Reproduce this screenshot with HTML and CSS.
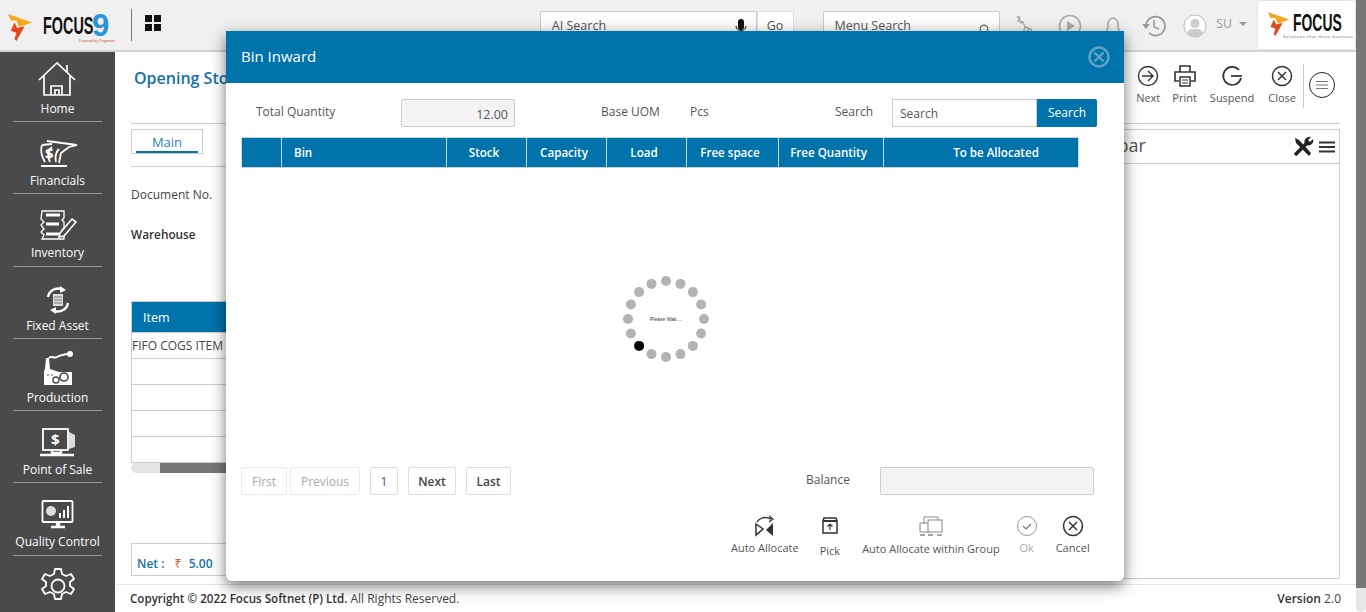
FILE: index.html
```html
<!DOCTYPE html>
<html>
<head>
  <meta charset="utf-8">
  <title>Opening Stock</title>
  <link rel="stylesheet" href="styles.css">
</head>
<body>
<div class="app">
  <div class="page">
    <header class="topbar">
      <div class="brand">
        <svg class="flame" width="26" height="28" viewBox="0 0 28 30"><polygon points="0,0 26,9 12,14 9,7 3,7" fill="#f5a623"/><polygon points="7,9 10,15 18,13 9,29 7,27 9,20 3,18" fill="#e2491f"/></svg>
        <div class="brand-mark">
          <div class="brand-line"><span class="brand-name">FOCUS</span><span class="brand-nine">9</span></div>
          <span class="brand-tag">Powered by Pragmatic</span>
        </div>
      </div>
      <div class="top-divider"></div>
      <svg class="apps" width="16" height="16" viewBox="0 0 16 16"><path d="M0 0h7v7H0zM9 0h7v7H9zM0 9h7v7H0zM9 9h7v7H9z" fill="#111"/></svg>
      <div class="top-search ai-search"><span>AI Search</span>
        <svg width="12" height="18" viewBox="0 0 12 18"><rect x="3" y="1" width="6" height="11" rx="3" fill="#111"/><path d="M1 8c0 6 10 6 10 0M6 13v3M3 16h6" stroke="#111" fill="none"/></svg>
      </div>
      <div class="go-btn">Go</div>
      <div class="top-search menu-search"><span>Menu Search</span>
        <svg width="12" height="12" viewBox="0 0 12 12"><circle cx="5" cy="5" r="3.800" stroke="#777" stroke-width="1.400" fill="none"/><path d="M8 8l3.500 3.500" stroke="#777" stroke-width="1.600"/></svg>
      </div>
      <svg class="top-icon deer" width="22" height="24" viewBox="0 0 22 24"><path d="M3 2l3 5 3 1 2 5 6 2 2 6M5 2l1 3M9 8l-3 1M11 13l-2 6M15 15l-4 5M3 7l3 0" stroke="#aaa" stroke-width="1.400" fill="none"/></svg>
      <svg class="top-icon play" width="24" height="24" viewBox="0 0 24 24"><circle cx="12" cy="12" r="10.500" stroke="#aaa" stroke-width="1.600" fill="none"/><path d="M9 7l8 5-8 5z" fill="#aaa"/></svg>
      <svg class="top-icon bell" width="22" height="24" viewBox="0 0 22 24"><path d="M4 18c2-2 2-5 2-8 0-3 2-6 5-6s5 3 5 6c0 3 0 6 2 8z M9 21h4" stroke="#aaa" stroke-width="1.600" fill="none"/></svg>
      <svg class="top-icon history" width="24" height="24" viewBox="0 0 24 24"><path d="M4 12a9.500 9.500 0 1 1 3 7" stroke="#999" stroke-width="1.700" fill="none"/><path d="M0 10h8l-4 5z" fill="#999"/><path d="M12 6v7l5 2" stroke="#999" stroke-width="1.600" fill="none"/></svg>
      <svg class="top-icon user" width="24" height="24" viewBox="0 0 24 24"><circle cx="12" cy="12" r="11" fill="#fff" stroke="#bbb"/><circle cx="12" cy="9.500" r="4.500" fill="#ccc"/><path d="M4 20c1-5 5-5 8-5s7 0 8 5c-4 4-12 4-16 0z" fill="#ccc"/></svg>
      <span class="user-name">SU</span>
      <span class="caret"></span>
      <div class="company-logo">
        <svg width="23" height="25" viewBox="0 0 28 30"><polygon points="0,0 26,9 12,14 9,7 3,7" fill="#f5a623"/><polygon points="7,9 10,15 18,13 9,29 7,27 9,20 3,18" fill="#e2491f"/></svg>
        <div class="company-text"><span class="company-name">FOCUS</span><span class="company-tag">Solutions that move business</span></div>
      </div>
    </header>

    <div class="workspace">
      <nav class="sidebar">
        <a class="nav-item">
          <svg width="40" height="36" viewBox="0 0 40 36"><path d="M1 19L19 2l18 17M29 4v7M6 15v19h26V15M13 34v-9h11v9M17 34v-5h4v5" stroke="#fff" stroke-width="1.700" fill="none"/></svg>
          <span>Home</span></a>
        <a class="nav-item">
          <svg width="38" height="30" viewBox="0 0 38 30"><path d="M8 2l30 4-8 2-8 6-2 10M3 6l10-1M3 6c-2 6 0 12 3 17M13 8c-4 3-5 9-2 15M20 10c-3 3-4 8-3 13M2 27h26" stroke="#fff" stroke-width="1.800" fill="none"/><text x="6" y="20" class="nav-glyph">$</text></svg>
          <span>Financials</span></a>
        <a class="nav-item">
          <svg width="38" height="32" viewBox="0 0 38 32"><path d="M3 2h22v7l-2 2 2 2v6l-2 2 2 1v8H3l2-4-3-3 3-3-3-4 3-3-3-3z" stroke="#fff" stroke-width="1.300" fill="none"/><path d="M7 6h14M7 15h13M7 25h13" stroke="#fff" stroke-width="3"/><path d="M21 24l12-14 4 3-12 14-5 1z" stroke="#fff" stroke-width="1.600" fill="#4a4a4a"/></svg>
          <span>Inventory</span></a>
        <a class="nav-item">
          <svg width="24" height="28" viewBox="0 0 24 28"><path d="M2 11C3 5 9 1 16 3M22 17c-1 6-7 10-14 8" stroke="#fff" stroke-width="2.400" fill="none"/><path d="M14 0l6 4-6 3zM10 21l-6 3 6 4z" fill="#fff"/><rect x="7" y="8" width="10" height="12" fill="#ddd"/><path d="M8 11h8M8 14h8M8 17h8" stroke="#777"/></svg>
          <span>Fixed Asset</span></a>
        <a class="nav-item">
          <svg width="32" height="36" viewBox="0 0 32 36"><path d="M3 19l1-11h3l1 11 9 3 1 0h12v13H2V21z" fill="#fff"/><circle cx="28" cy="4" r="3" fill="#fff"/><path d="M7 8c3-3 5 1 8-1s5-2 10-3" stroke="#fff" stroke-width="2" fill="none"/><circle cx="22" cy="27" r="4" stroke="#4a4a4a" stroke-width="1.600" fill="none"/><circle cx="14" cy="30" r="3" stroke="#4a4a4a" stroke-width="1.400" fill="none"/><path d="M5 25h2M9 25h2" stroke="#4a4a4a"/></svg>
          <span>Production</span></a>
        <a class="nav-item">
          <svg width="38" height="30" viewBox="0 0 38 30"><rect x="4" y="1" width="25" height="21" stroke="#fff" stroke-width="1.800" fill="none"/><path d="M30 4l6 3v12l-6 2z" fill="#ddd"/><path d="M13 22v3h9v-3M1 27h34" stroke="#fff" stroke-width="2.400" fill="none"/><text x="12" y="17" class="nav-glyph">$</text></svg>
          <span>Point of Sale</span></a>
        <a class="nav-item">
          <svg width="34" height="30" viewBox="0 0 34 30"><rect x="1.500" y="1" width="30" height="21" rx="1" stroke="#fff" stroke-width="1.800" fill="none"/><circle cx="10" cy="11" r="5" fill="#ddd"/><path d="M18 18v-5h2v5zM22 18v-8h2v8zM26 18V6h2v12z" fill="#fff"/><path d="M16 22v3h2v-3M10 27h14" stroke="#fff" stroke-width="2.400"/></svg>
          <span>Quality Control</span></a>
        <a class="nav-item">
          <svg width="38" height="38" viewBox="0 0 38 38"><path d="M16 2h6l1 5 4 2 5-2 3 5-4 3v4l4 3-3 5-5-2-4 2-1 5h-6l-1-5-4-2-5 2-3-5 4-3v-4L3 12l3-5 5 2 4-2z" stroke="#fff" stroke-width="1.800" fill="none" stroke-linejoin="round"/><circle cx="19" cy="19" r="6.500" stroke="#fff" stroke-width="1.800" fill="none"/></svg>
          <span>Settings</span></a>
      </nav>

      <div class="content">
        <main class="main-area">
          <div class="doc-head">
            <h1 class="doc-title">Opening Stocks New</h1>
            <div class="doc-tools">
              <div class="tool">
                <svg width="22" height="22" viewBox="0 0 22 22"><circle cx="11" cy="11" r="9.500" stroke="#333" stroke-width="1.400" fill="none"/><path d="M5 11h11M11 6l5 5-5 5" stroke="#333" stroke-width="1.400" fill="none"/></svg>
                <span>Next</span></div>
              <div class="tool tool-print">
                <svg width="22" height="22" viewBox="0 0 22 22"><path d="M6 7V1h10v6M5 16H1V7h20v9h-4" stroke="#333" stroke-width="1.600" fill="none"/><path d="M6 12h10v9H6z" stroke="#333" stroke-width="1.500" fill="none"/><path d="M8 15h6M8 18h6" stroke="#333"/></svg>
                <span>Print</span></div>
              <div class="tool">
                <svg width="22" height="22" viewBox="0 0 22 22"><path d="M18 5a9 9 0 1 0 2 8" stroke="#333" stroke-width="1.700" fill="none"/><path d="M10 11h11" stroke="#333" stroke-width="1.700"/></svg>
                <span>Suspend</span></div>
              <div class="tool tool-close">
                <svg width="22" height="22" viewBox="0 0 22 22"><circle cx="11" cy="11" r="9.500" stroke="#333" stroke-width="1.500" fill="none"/><path d="M7 7l8 8M15 7l-8 8" stroke="#333" stroke-width="1.500"/></svg>
                <span>Close</span></div>
              <div class="tool-divider"></div>
              <svg class="doc-menu" width="28" height="28" viewBox="0 0 28 28"><circle cx="14" cy="14" r="12.500" stroke="#222" fill="#fff"/><path d="M8 10.500h12M8 14h12M8 17.500h12" stroke="#777"/></svg>
            </div>
          </div>
          <div class="doc-body">
            <section class="doc-form">
              <div class="tabs"><div class="tab">Main</div></div>
              <div class="field-row doc-no">Document No.</div>
              <div class="field-row warehouse">Warehouse</div>
              <table class="item-table">
                <tr><th>Item</th></tr>
                <tr><td>FIFO COGS ITEM</td></tr>
                <tr><td></td></tr>
                <tr><td></td></tr>
                <tr><td></td></tr>
                <tr><td></td></tr>
              </table>
              <div class="h-scroll"><div class="h-thumb"></div></div>
              <div class="net-box">
                <span class="net-label">Net :</span><span class="rupee">₹</span><span class="net-value">5.00</span>
              </div>
            </section>
            <aside class="side-panel">
              <div class="side-head">
                <span class="side-title">Sidebar</span>
                <svg width="22" height="22" viewBox="0 0 22 22"><path d="M3 19L15 7" stroke="#222" stroke-width="3.500"/><path d="M13 8a5 5 0 0 1 6-7l-3 3 2 2 3-3a5 5 0 0 1-7 6z" fill="#222"/><path d="M3 2l4 2 12 13-2 3L4 7z" fill="#222"/></svg>
                <svg width="16" height="12" viewBox="0 0 16 12"><path d="M0 1.500h16M0 6h16M0 10.500h16" stroke="#333" stroke-width="1.800"/></svg>
              </div>
            </aside>
          </div>
        </main>
        <footer class="footer">
          <span class="copyright"><b>Copyright © 2022 Focus Softnet (P) Ltd.</b> All Rights Reserved.</span>
          <span class="version"><b>Version</b> 2.0</span>
        </footer>
      </div>
    </div>
  </div>
  <div class="v-scroll"><div class="v-thumb"></div></div>

  <div class="modal">
    <div class="modal-head">
      <span class="modal-title">Bin Inward</span>
      <svg width="24" height="24" viewBox="0 0 24 24"><circle cx="12" cy="12" r="9.500" stroke="#5fa3c9" stroke-width="2.400" fill="none"/><path d="M7.500 7.500l9 9M16.500 7.500l-9 9" stroke="#5fa3c9" stroke-width="2.400"/></svg>
    </div>
    <div class="modal-body">
      <div class="filter-row">
        <label class="lbl-qty">Total Quantity</label>
        <div class="ro-box qty-box">12.00</div>
        <label class="lbl-uom">Base UOM</label>
        <label class="lbl-pcs">Pcs</label>
        <label class="lbl-search">Search</label>
        <div class="search-box">Search</div>
        <div class="search-btn">Search</div>
      </div>
      <table class="bin-table">
        <colgroup><col class="c-sel"><col class="c-bin"><col class="c-num"><col class="c-num"><col class="c-num"><col class="c-free"><col class="c-qty"><col class="c-alloc"></colgroup>
        <tr>
          <th></th><th class="left">Bin</th><th>Stock</th><th>Capacity</th><th>Load</th><th>Free space</th><th>Free Quantity</th><th class="alloc">To be Allocated</th>
        </tr>
      </table>
      <div class="loader-area">
        <svg class="loader" width="92" height="92" viewBox="-46 -46 92 92">
          <g fill="#b3b3b3">
            <circle cx="0" cy="-38" r="5"/><circle cx="14.500" cy="-35.100" r="5"/><circle cx="26.900" cy="-26.900" r="5"/><circle cx="35.100" cy="-14.500" r="5"/>
            <circle cx="38" cy="0" r="5"/><circle cx="35.100" cy="14.500" r="5"/><circle cx="26.900" cy="26.900" r="5"/><circle cx="14.500" cy="35.100" r="5"/>
            <circle cx="0" cy="38" r="5"/><circle cx="-14.500" cy="35.100" r="5"/><circle cx="-35.100" cy="14.500" r="5"/><circle cx="-38" cy="0" r="5"/>
            <circle cx="-35.100" cy="-14.500" r="5"/><circle cx="-26.900" cy="-26.900" r="5"/><circle cx="-14.500" cy="-35.100" r="5"/>
          </g>
          <circle cx="-26.900" cy="26.900" r="5" fill="#000"/>
          <text x="0" y="1.500" text-anchor="middle" class="loader-text">Please Wait ...</text>
        </svg>
      </div>
      <div class="pager-row">
        <div class="pg pg-first off">First</div>
        <div class="pg pg-prev off">Previous</div>
        <div class="pg pg-one">1</div>
        <div class="pg pg-next strong">Next</div>
        <div class="pg pg-last strong">Last</div>
        <label class="lbl-balance">Balance</label>
        <div class="ro-box balance-box"></div>
      </div>
      <div class="action-row">
        <div class="action act-auto">
          <svg width="22" height="22" viewBox="0 0 22 22"><path d="M3 7C5 3 11 1 17 4" stroke="#333" stroke-width="1.500" fill="none"/><path d="M15 1l4 3-4 3" stroke="#333" stroke-width="1.300" fill="none"/><path d="M2 9l7 5-7 6z" stroke="#333" stroke-width="1.500" fill="none"/><path d="M19 8v13l-7-6z" fill="#333"/></svg>
          <span>Auto Allocate</span></div>
        <div class="action act-pick">
          <svg width="18" height="22" viewBox="0 0 18 22"><path d="M2 6l1-3h12l1 3v12H2z" stroke="#333" stroke-width="1.500" fill="none"/><path d="M2 6h14" stroke="#333" stroke-width="2"/><path d="M9 15v-6M6.500 11.500L9 9l2.500 2.500" stroke="#333" stroke-width="1.200" fill="none"/></svg>
          <span>Pick</span></div>
        <div class="action act-group">
          <svg width="24" height="22" viewBox="0 0 24 22"><path d="M5 9V2h14v5" stroke="#888" fill="none"/><rect x="1" y="8" width="10" height="9" stroke="#888" fill="none"/><rect x="9" y="5" width="14" height="12" stroke="#888" fill="#fff"/><path d="M1 20h5M9 20h5M18 20h5" stroke="#888" stroke-width="1.600"/></svg>
          <span>Auto Allocate within Group</span></div>
        <div class="action act-ok">
          <svg width="22" height="22" viewBox="0 0 22 22"><circle cx="11" cy="11" r="9.500" stroke="#8b9aa5" fill="none"/><path d="M7 11l3 3 5-5" stroke="#777" stroke-width="1.200" fill="none"/></svg>
          <span>Ok</span></div>
        <div class="action act-cancel">
          <svg width="22" height="22" viewBox="0 0 22 22"><circle cx="11" cy="11" r="9.500" stroke="#333" stroke-width="1.500" fill="none"/><path d="M7 7l8 8M15 7l-8 8" stroke="#333" stroke-width="1.500"/></svg>
          <span>Cancel</span></div>
      </div>
    </div>
  </div>
</div>
</body>
</html>
```

FILE: styles.css
```css
* {
  box-sizing: border-box;
}
html, body {
  margin: 0;
  height: 612px;
  overflow: hidden;
}
body {
  font-family: "Open Sans", sans-serif;
  font-size: 12px;
  color: #444;
  background: #fff;
}
.app {
  position: relative;
  display: flex;
  width: 1366px;
  height: 612px;
  overflow: hidden;
}
.page {
  width: 1356px;
  height: 612px;
  display: flex;
  flex-direction: column;
}

/* scrollbar */
.v-scroll {
  width: 10px;
  height: 612px;
  background: #e6e6e6;
  border-radius: 0 0 5px 5px;
}
.v-thumb {
  height: 588px;
  background: #777;
}

/* top bar */
.topbar {
  height: 52px;
  flex: none;
  display: flex;
  align-items: flex-start;
  background: #f0f0f0;
  border-bottom: 2px solid #d2d2d2;
}
.brand {
  width: 123px;
  height: 50px;
  display: flex;
  padding: 14px 0 0 8px;
}
.brand-mark {
  display: flex;
  flex-direction: column;
  margin-left: 9px;
}
.brand-line {
  height: 23px;
  display: flex;
  align-items: center;
}
.brand-name {
  width: 49px;
  font-family: "Liberation Sans", sans-serif;
  font-weight: 700;
  font-size: 24px;
  color: #111;
  transform: scaleX(.6);
  transform-origin: left center;
  white-space: nowrap;
}
.brand-nine {
  font-family: "Liberation Sans", sans-serif;
  font-weight: 700;
  font-size: 31px;
  line-height: 23px;
  color: #2a93d5;
}
.brand-tag {
  margin: 2px 0 0 36px;
  font-size: 3.500px;
  line-height: 4px;
  color: #c83a3a;
  white-space: nowrap;
}
.top-divider {
  width: 1px;
  height: 32px;
  margin: 9px 0 0 8px;
  background: #777;
}
.apps {
  margin: 15px 0 0 13px;
}
.top-search {
  height: 40px;
  margin-top: 11px;
  padding: 5px 11px 0;
  display: flex;
  justify-content: space-between;
  background: linear-gradient(#fff, #f4f4f4);
  border: 1px solid #ccc;
  border-radius: 2px;
  font-size: 12.500px;
  color: #555;
}
.ai-search {
  width: 217px;
  margin-left: 379px;
}
.ai-search svg {
  margin: 1px -2px 0 0;
}
.menu-search {
  width: 178px;
  margin-left: 29px;
}
.menu-search svg {
  margin-top: 7px;
  margin-right: -3px;
}
.go-btn {
  width: 37px;
  height: 40px;
  margin-top: 11px;
  padding-top: 5px;
  text-align: center;
  background: #fff;
  border: 1px solid #ddd;
  font-size: 12.500px;
  color: #555;
}
.top-icon {
  margin-top: 14px;
}
.deer {
  margin-left: 14px;
}
.play {
  margin-left: 22px;
}
.bell {
  margin-left: 20px;
}
.history {
  margin-left: 18px;
}
.user {
  margin-left: 17px;
}
.user-name {
  margin: 15px 0 0 9px;
  font-size: 12.500px;
  color: #999;
}
.caret {
  margin: 22px 0 0 7px;
  border: 4px solid transparent;
  border-top-color: #999;
}
.company-logo {
  width: 99px;
  height: 50px;
  margin-left: 10px;
  padding: 11px 0 0 10px;
  display: flex;
  gap: 2px;
  background: #fff;
  border: 1px solid #e6e6e6;
  border-radius: 3px;
}
.company-text {
  display: flex;
  flex-direction: column;
}
.company-name {
  width: 47px;
  font-family: "Liberation Sans", sans-serif;
  font-weight: 700;
  font-size: 24px;
  line-height: 22px;
  color: #111;
  transform: scaleX(.58);
  transform-origin: left center;
  white-space: nowrap;
}
.company-tag {
  margin-left: -10px;
  font-size: 4px;
  line-height: 6px;
  letter-spacing: .55px;
  color: #555;
  white-space: nowrap;
}

/* sidebar */
.workspace {
  flex: 1;
  display: flex;
  min-height: 0;
}
.sidebar {
  width: 115px;
  flex: none;
  background: #4a4a4a;
  overflow: hidden;
}
.nav-item {
  height: 72.300px;
  margin: 0 13px;
  padding-bottom: 4.400px;
  display: flex;
  flex-direction: column;
  align-items: center;
  justify-content: flex-end;
  gap: 3px;
  border-bottom: 1px solid #9a9a9a;
  color: #fff;
  font-size: 12px;
  white-space: nowrap;
}
.nav-item:first-child {
  height: 70px;
}
.nav-item:last-child {
  border-bottom: 0;
  justify-content: flex-start;
  padding-top: 11px;
  height: 90px;
}
.nav-glyph {
  font-family: "Open Sans", sans-serif;
  font-weight: 700;
  font-size: 15px;
  fill: #fff;
}

/* page behind the dialog */
.content {
  flex: 1;
  min-width: 0;
  display: flex;
  flex-direction: column;
}
.main-area {
  flex: 1;
  min-height: 0;
  padding: 0 16px;
  border-bottom: 1px solid #e6e6e6;
}
.doc-head {
  height: 72px;
  display: flex;
  justify-content: space-between;
  border-bottom: 1px solid #ccc;
}
.doc-title {
  margin: 15px 0 0 3px;
  font-size: 16px;
  font-weight: 600;
  color: #1570a6;
}
.doc-tools {
  display: flex;
  align-items: flex-start;
  padding-top: 13px;
}
.tool {
  display: flex;
  flex-direction: column;
  align-items: center;
  margin-left: 13px;
  font-size: 11px;
  color: #555;
}
.tool span {
  margin-top: 3px;
}
.tool-print {
  margin-left: 12px;
}
.tool-close {
  margin-left: 14px;
}
.tool-divider {
  width: 1px;
  height: 44px;
  margin: -1px 4px 0 7px;
  background: #ccc;
}
.doc-menu {
  margin-top: 6px;
  margin-right: 4px;
}
.doc-body {
  display: flex;
  gap: 10px;
  padding-top: 5px;
}
.doc-form {
  width: 934px;
  flex: none;
}
.tabs {
  height: 38px;
  border-bottom: 1px solid #ccc;
}
.tab {
  width: 72px;
  height: 25px;
  padding-top: 3px;
  text-align: center;
  border: 1px solid #ccc;
  background: linear-gradient(#0073aa, #0073aa) no-repeat 50% 100% / 62px 2px;
  font-size: 13px;
  color: #2d7fb0;
}
.field-row {
  font-size: 12px;
  color: #444;
}
.doc-no {
  margin-top: 19px;
}
.warehouse {
  margin-top: 23px;
  font-size: 11.800px;
  font-weight: 600;
  color: #333;
}
.item-table {
  width: 100%;
  margin-top: 59px;
  border-collapse: collapse;
  table-layout: fixed;
  border: 1px solid #ccc;
}
.item-table th {
  height: 31px;
  padding-left: 11px;
  text-align: left;
  background: #0073aa;
  color: #fff;
  font-weight: 400;
  font-size: 12.500px;
}
.item-table td {
  height: 26px;
  padding: 0;
  border-top: 1px solid #ccc;
  font-size: 12px;
  color: #444;
}
.h-scroll {
  height: 10px;
  background: #e3e3e3;
  border-radius: 5px;
}
.h-thumb {
  height: 10px;
  margin-left: 29px;
  background: #777;
}
.net-box {
  height: 33px;
  margin-top: 70px;
  padding: 8px 0 0 5px;
  display: flex;
  align-items: center;
  border: 1px solid #ccc;
  color: #1570a6;
  font-weight: 600;
}
.rupee {
  margin-left: 10px;
  color: #d9663c;
  font-family: "Noto Sans", sans-serif;
  font-size: 12.500px;
  font-weight: 400;
}
.net-value {
  margin-left: 7px;
}
.net-label {
  font-weight: 600;
}
.side-panel {
  flex: 1;
  height: 450px;
  border: 1px solid #ccc;
}
.side-head {
  height: 34px;
  padding: 0 4px 0 6px;
  display: flex;
  align-items: center;
  gap: 5px;
  border-bottom: 1px solid #ccc;
}
.side-title {
  flex: 1;
  margin-top: -3px;
  font-size: 18px;
  color: #555;
}

/* footer */
.footer {
  height: 27px;
  flex: none;
  padding: 0 15px;
  display: flex;
  justify-content: space-between;
  align-items: center;
  font-size: 12px;
  color: #444;
}
.footer b {
  font-weight: 600;
  color: #333;
}
.copyright b {
  font-size: 11.600px;
}

/* Bin Inward dialog */
.modal {
  position: absolute;
  left: 226px;
  top: 31px;
  width: 898px;
  height: 550px;
  display: flex;
  flex-direction: column;
  background: #fff;
  border-radius: 0 0 6px 6px;
  box-shadow: 0 5px 15px rgba(0, 0, 0, .55);
}
.modal-head {
  height: 52px;
  flex: none;
  padding: 0 13px 0 15px;
  display: flex;
  justify-content: space-between;
  align-items: center;
  background: #0073aa;
}
.modal-title {
  margin-top: -2px;
  font-size: 15px;
  color: #fff;
}
.modal-body {
  flex: 1;
  min-height: 0;
  display: flex;
  flex-direction: column;
  padding: 16px 27px 0 15px;
}
.filter-row {
  height: 28px;
  display: flex;
  align-items: flex-start;
  font-size: 12px;
}
.filter-row label {
  padding-top: 4px;
  color: #555;
}
.lbl-qty {
  width: 145px;
  margin-left: 15px;
}
.ro-box {
  background: #f4f4f4;
  border: 1px solid #ccc;
  border-radius: 2px;
}
.qty-box {
  width: 114px;
  height: 28px;
  padding: 6px 6px 0 0;
  text-align: right;
  font-size: 12.500px;
  color: #555;
}
.lbl-uom {
  width: 89px;
  margin-left: 86px;
}
.lbl-pcs {
  width: 145px;
}
.lbl-search {
  width: 57px;
}
.search-box {
  width: 145px;
  height: 28px;
  padding: 5px 0 0 7px;
  border: 1px solid #ccc;
  font-size: 12px;
  color: #555;
}
.search-btn {
  width: 60px;
  height: 28px;
  padding-top: 5px;
  text-align: center;
  background: #0073aa;
  color: #fff;
  border-radius: 0 2px 2px 0;
}
.bin-table {
  width: 838px;
  margin-top: 10px;
  flex: none;
  border-collapse: collapse;
  table-layout: fixed;
}
.c-sel { width: 40px; }
.c-bin { width: 165px; }
.c-num { width: 80px; }
.c-free { width: 92px; }
.c-qty { width: 105px; }
.c-alloc { width: 195px; }
.bin-table th {
  height: 30px;
  padding: 0 5px 0 0;
  background: #0073aa;
  border: 1px solid #c9d3d9;
  color: #fff;
  font-size: 11.600px;
  font-weight: 600;
}
.bin-table th.left {
  padding: 0 0 0 12px;
  text-align: left;
}
.bin-table th.alloc {
  padding: 0 0 0 30px;
}
.loader-area {
  height: 299px;
  flex: none;
  padding: 105px 0 0 379px;
}
.loader {
  display: block;
}
.loader-text {
  font-family: "Liberation Sans", sans-serif;
  font-size: 5px;
  fill: #333;
}
.pager-row {
  height: 28px;
  flex: none;
  display: flex;
  align-items: flex-start;
}
.pg {
  height: 28px;
  padding-top: 5px;
  text-align: center;
  border: 1px solid #ddd;
  border-radius: 2px;
  color: #555;
}
.pg.off {
  border-color: #ebebeb;
  color: #aaa;
}
.pg.strong {
  font-weight: 600;
  color: #444;
}
.pg-first { width: 46px; }
.pg-prev { width: 70px; margin-left: 3px; }
.pg-one { width: 28px; margin-left: 10px; }
.pg-next { width: 48px; margin-left: 10px; }
.pg-last { width: 45px; margin-left: 10px; }
.lbl-balance {
  width: 74px;
  margin-left: 295px;
  padding-top: 4px;
  color: #555;
}
.balance-box {
  width: 214px;
  height: 28px;
}
.action-row {
  height: 50px;
  margin-top: 20px;
  display: flex;
  font-size: 11px;
  color: #555;
}
.action {
  display: flex;
  flex-direction: column;
  align-items: center;
  white-space: nowrap;
}
.action span {
  margin-top: 3px;
}
.act-auto { margin-left: 490px; }
.act-pick { margin-left: 21px; }
.act-pick span { margin-top: 6px; }
.act-group { margin-left: 22px; }
.act-group span { margin-top: 4px; }
.act-ok { margin-left: 16px; color: #aaa; }
.act-cancel { margin-left: 18px; }
```
